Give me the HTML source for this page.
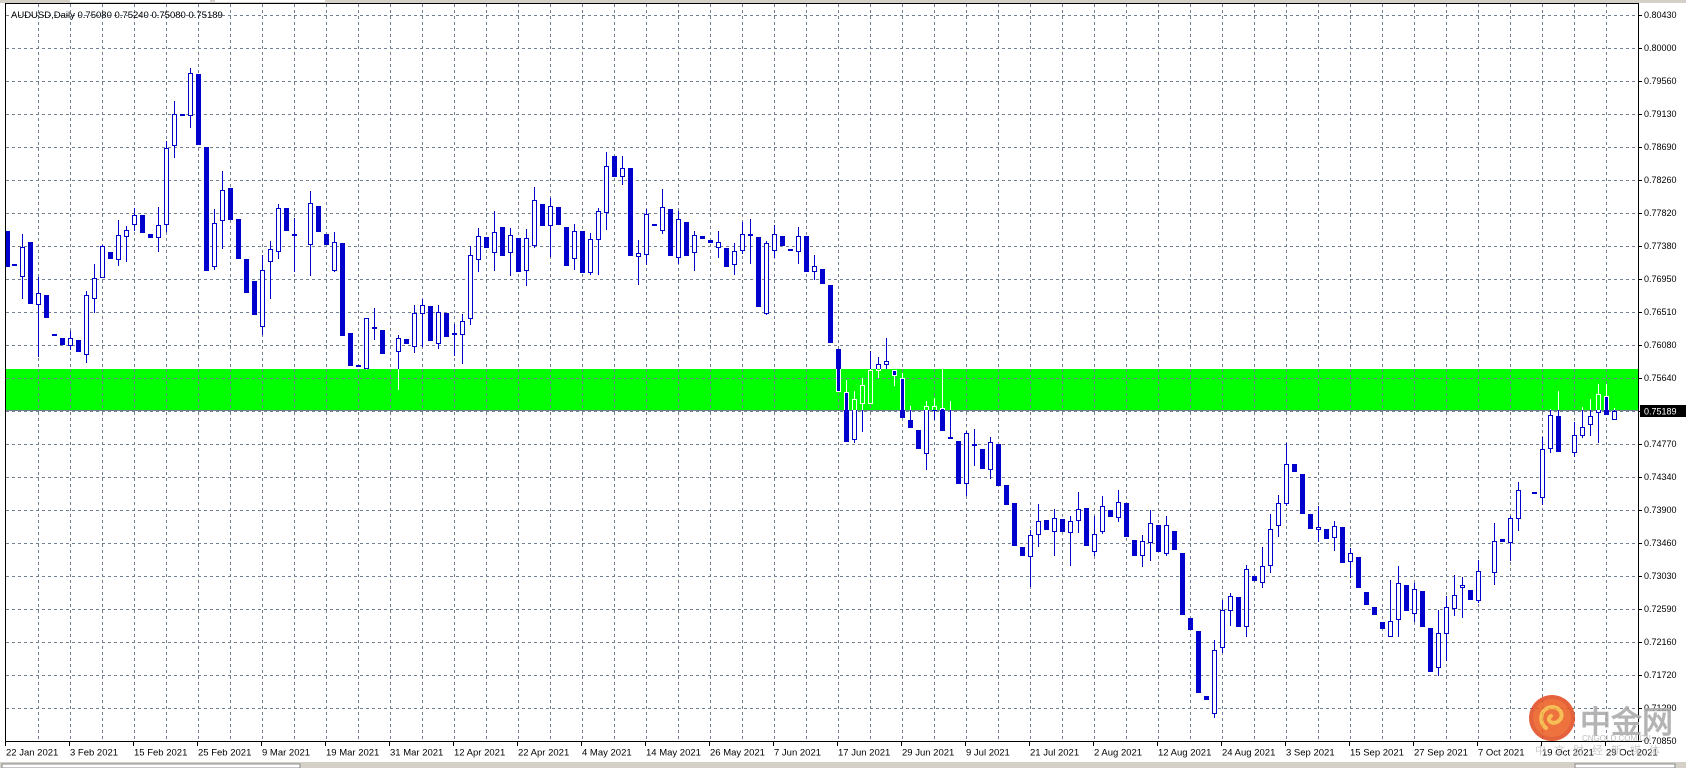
<!DOCTYPE html>
<html><head><meta charset="utf-8">
<style>
html,body{margin:0;padding:0;background:#fff;width:1686px;height:768px;overflow:hidden}
svg{display:block}
text{font-family:"Liberation Sans",sans-serif}
</style></head>
<body>
<svg id="c" width="1686" height="768" xmlns="http://www.w3.org/2000/svg">
<rect x="0" y="0" width="1686" height="768" fill="#fff"/>
<rect x="0" y="0" width="1686" height="3" fill="#d4d0c8"/>
<rect x="70" y="0" width="140" height="2" fill="#fff"/>
<rect x="215" y="0" width="110" height="2" fill="#fff"/>
<rect x="0" y="762" width="1686" height="6" fill="#d4d0c8"/>
<rect x="2" y="764" width="298" height="4" fill="#fff" stroke="#888" stroke-width="1"/>
<rect x="1575" y="764" width="100" height="4" fill="#fff" stroke="#888" stroke-width="1"/>
<g id="grid"></g>
<rect x="6" y="369" width="1632" height="42" fill="#00ff00"/>
<g id="grid2"></g>
<line x1="6" y1="410.5" x2="1638" y2="410.5" stroke="#708090" stroke-width="1"/>
<g id="candles"></g>
<defs><clipPath id="gc"><rect x="6" y="369" width="1632" height="41"/></clipPath></defs>
<g id="candles2" clip-path="url(#gc)"></g>
<line x1="5.5" y1="3" x2="5.5" y2="742" stroke="#000"/>
<line x1="5" y1="3.5" x2="1638" y2="3.5" stroke="#000"/>
<line x1="1638.5" y1="3" x2="1638.5" y2="742" stroke="#000"/>
<line x1="5" y1="741.5" x2="1639" y2="741.5" stroke="#000"/>
<text x="11" y="18" font-size="9.5" fill="#000">AUDUSD,Daily  0.75080 0.75240 0.75080 0.75189</text>
<g id="axis" font-size="9" fill="#000"></g>
<rect x="1640" y="405" width="46" height="12" fill="#000"/>
<text x="1644" y="414.5" font-size="9" fill="#fff">0.75189</text>
<g id="dates" font-size="9.5" fill="#000"></g>
<g opacity="0.85">
<circle cx="1552" cy="718" r="23" fill="#e0471b"/>
<circle cx="1552" cy="718" r="19" fill="#ea5a1c"/>
<path d="M1546 728 C1538 722 1540 708 1552 707 C1562 707 1565 718 1557 722 C1551 725 1546 719 1551 716" fill="none" stroke="#f6b23a" stroke-width="4" stroke-linecap="round"/>
<text x="1580" y="733" font-size="31" fill="#a8a8a8" font-family="'Noto Sans CJK SC',sans-serif" font-weight="bold">中金网</text>
<text x="1582" y="741" font-size="8" fill="#b0b0b0">CNGOLD.COM.CN</text>
<text x="1535" y="754" font-size="11" fill="#c0c0c0" font-family="'Noto Sans CJK SC',sans-serif" letter-spacing="8">中文财经新媒体</text>
</g>
</svg>
<script>
var NS="http://www.w3.org/2000/svg";
function el(p,n,a,t){var e=document.createElementNS(NS,n);for(var k in a)e.setAttribute(k,a[k]);if(t!=null)e.textContent=t;p.appendChild(e);return e;}
var grid=document.getElementById('grid'),grid2=document.getElementById('grid2');
[grid,grid2].forEach(function(g,gi){
for(var k=0;k<22;k++){var y=Math.round(14.7+33*k)+0.5;if(gi==1&&(y<369||y>411))continue;
el(g,'line',{x1:6,y1:y,x2:1638,y2:y,stroke:'#708090','stroke-dasharray':'3,3','stroke-width':1});}
for(var k=0;k<50;k++){var x=Math.round(38.3+32*k)+0.5;
if(gi==0)el(g,'line',{x1:x,y1:4,x2:x,y2:741,stroke:'#708090','stroke-dasharray':'3,3','stroke-width':1});
else el(g,'line',{x1:x,y1:369,x2:x,y2:411,stroke:'#708090','stroke-dasharray':'3,3','stroke-width':1});}
});
var prices=["0.80430","0.80000","0.79560","0.79130","0.78690","0.78260","0.77820","0.77380","0.76950","0.76510","0.76080","0.75640",null,"0.74770","0.74340","0.73900","0.73460","0.73030","0.72590","0.72160","0.71720","0.71290","0.70850"];
var ax=document.getElementById('axis');
prices.forEach(function(p,k){var y=14.7+33*k;el(ax,'line',{x1:1638,y1:Math.round(y)+0.5,x2:1642,y2:Math.round(y)+0.5,stroke:'#000'});if(p)el(ax,'text',{x:1644,y:y+3.5},p);});
var dates=["22 Jan 2021","3 Feb 2021","15 Feb 2021","25 Feb 2021","9 Mar 2021","19 Mar 2021","31 Mar 2021","12 Apr 2021","22 Apr 2021","4 May 2021","14 May 2021","26 May 2021","7 Jun 2021","17 Jun 2021","29 Jun 2021","9 Jul 2021","21 Jul 2021","2 Aug 2021","12 Aug 2021","24 Aug 2021","3 Sep 2021","15 Sep 2021","27 Sep 2021","7 Oct 2021","19 Oct 2021","29 Oct 2021"];
var dg=document.getElementById('dates');
dates.forEach(function(d,i){var x=5+64*i;el(dg,'line',{x1:x+0.5,y1:742,x2:x+0.5,y2:746,stroke:'#000'});el(dg,'text',{x:x+1,y:755.5},d);});
var groups=[
[0,50,3,[[20,'d',543,650],[43,'d',641,647],[67,'u',592,680,552,746],[91,'d',576,762],[115,'u',730,766,682,922],[139,'d',735,803],[163,'d',852,858],[187,'d',864,884],[211,'u',865,889,843,899],[235,'d',870,905],[259,'u',736,916,724,940],[283,'u',685,748,642,788],[307,'u',589,685,584,685],[331,'d',606,626],[355,'u',556,631,510,647],[379,'u',541,562,528,635],[403,'u',496,526,475,542],[427,'d',495,548],[451,'d',552,563],[475,'u',526,565,471,605],[499,'u',295,526,273,545],[523,'u',193,289,153,323],[547,'d',192,198],[571,'u',70,199,54,234],[595,'d',72,284],[619,'d',292,662],[643,'u',520,650,477,660],[667,'u',421,514,363,596],[691,'d',414,509],[715,'d',507,626],[739,'d',627,728],[763,'d',693,794],[787,'u',661,832,614,854],[811,'u',598,637,574,746],[835,'u',475,607,462,626],[859,'d',474,542],[883,'u',552,559,503,667],[931,'u',460,586,423,678],[955,'d',468,545],[979,'d',552,584],[1003,'u',577,662,546,665],[1027,'d',579,857],[1051,'d',849,947],[1075,'d',945,950],[1099,'u',805,958,805,960],[1123,'u',830,834,774,869]]],
[380,130,3,[[7,'d',600,671],[55,'u',625,667,615,780],[79,'d',627,641],[103,'u',550,652,525,668],[127,'u',526,553,508,651],[151,'d',528,632],[175,'u',547,643,525,656],[199,'d',549,620],[223,'u',610,616,582,679],[247,'u',574,614,552,701],[271,'u',376,568,347,584],[295,'u',319,391,294,425],[319,'d',321,353],[343,'u',307,370,243,422],[367,'d',291,377],[391,'u',316,370,294,437],[415,'d',324,425],[439,'u',325,424,297,469],[463,'u',211,349,171,353],[487,'d',222,287],[511,'u',229,289,205,380],[535,'d',231,284],[559,'d',291,407],[583,'u',304,388,283,421],[607,'d',303,428],[631,'u',328,428,310,434],[655,'u',244,331,235,434],[679,'u',109,250,66,299],[703,'d',78,140],[727,'u',115,142,78,164],[751,'d',114,377],[775,'u',370,381,330,464],[799,'u',253,374,238,405],[823,'d',283,289],[847,'u',232,304,178,311],[871,'d',237,377],[895,'u',268,385,244,401],[919,'d',276,377],[943,'u',316,370,303,422],[967,'d',318,326],[991,'d',330,338],[1015,'u',337,355,303,383],[1039,'d',354,412],[1063,'u',364,406,340,434],[1087,'u',313,364,277,373],[1111,'u',312,316,267,401],[1135,'d',321,530],[1159,'u',340,553,333,556],[1183,'u',313,364,285,385],[1207,'d',318,347],[1231,'d',358,362],[1255,'u',319,367,292,402]]],
[790,200,3,[[49,'d',107,215],[73,'u',199,217,165,241],[97,'d',207,251]]],
[760,300,3,[[235,'d',147,277],[259,'d',277,425,240,425],[283,'u',297,421,273,430],[307,'u',256,311,234,395],[331,'u',211,311,152,311],[355,'u',193,214,171,234],[379,'u',184,196,114,207],[403,'d',211,229,211,257],[427,'d',233,353,220,353],[451,'d',360,383,318,383],[475,'d',390,446],[499,'u',319,461,303,509],[523,'u',319,333,293,360],[547,'d',323,393,207,393],[571,'d',411,416,303,416],[595,'d',423,551],[619,'u',400,553,393,587],[643,'u',431,435,387,497],[667,'d',447,506],[691,'u',427,509,411,536],[715,'d',432,557],[739,'d',555,614],[763,'d',608,737],[787,'d',741,767],[811,'u',706,770,689,860],[835,'u',664,706,612,740],[859,'d',660,689],[883,'u',655,697,628,767],[907,'d',657,697],[931,'u',664,700,648,797],[955,'u',628,664,577,700],[979,'d',625,737],[1003,'u',703,757,648,768],[1027,'u',619,697,589,703],[1051,'d',630,650],[1075,'u',607,655,571,665],[1099,'d',609,710],[1123,'d',720,767],[1147,'u',724,769,705,800],[1171,'u',670,730,631,782]]],
[1100,370,3,[[175,'d',465,545],[199,'u',466,553,438,557],[223,'d',484,539],[247,'d',549,734],[391,'u',679,724,670,767],[415,'d',681,770],[439,'u',598,772,585,802],[463,'d',618,632],[487,'u',589,640,531,653],[511,'u',478,589,432,608],[535,'u',400,469,376,500],[559,'u',283,403,220,409],[583,'d',283,305],[607,'d',313,431],[631,'d',432,476],[655,'u',472,481,408,517],[679,'d',477,506],[703,'u',469,505,453,542],[727,'d',471,578],[751,'u',550,577,533,624],[775,'d',561,653],[799,'d',666,704],[823,'d',711,734],[847,'d',756,778],[871,'u',754,802,630,802],[895,'u',640,751,588,800],[919,'d',646,722],[943,'u',658,733,638,755],[967,'d',663,770],[1063,'u',676,718,616,737],[1087,'u',646,655,621,743],[1111,'d',660,689],[1135,'u',604,694,570,700],[1183,'u',514,610,459,644],[1207,'d',508,516],[1231,'u',445,520,438,572],[1255,'u',361,448,336,482]]],
[1180,600,3,[[31,'d',54,89],[55,'d',93,278],[79,'d',288,300],[103,'u',151,341,121,353],[127,'u',31,145,0,160]]],
[0,0,1,[[830,'d',285,343],[1430,'d',628,672],[1438,'u',633,668,610,676],[1446,'u',607,634,596,661],[1534,'d',492,494],[1542,'u',449,498,437,505],[1550,'u',415,449,409,453],[1558,'d',416,452,391,452],[1574,'u',435,453,422,457],[1582,'u',427,436,407,438],[1590,'u',416,425,399,436],[1598,'u',394,413,384,443],[1606,'d',396,415,384,415],[1614,'u',411,420,408,420]]]
];
var cg=document.getElementById('candles'),cg2=document.getElementById('candles2');
var B='#0000cd';
function draw(g,ox,oy,s,c,alt){
 var cx=Math.round(ox+c[0]/s);
 var bt=Math.round(oy+c[2]/s),bb=Math.round(oy+c[3]/s);
 var wt=c.length>4?Math.round(oy+c[4]/s):bt,wb=c.length>5?Math.round(oy+c[5]/s):bb;
 var col=alt?'#fff':B;
 if(wt<bt)el(g,'line',{x1:cx+0.5,y1:wt,x2:cx+0.5,y2:bt,stroke:col});
 if(wb>bb)el(g,'line',{x1:cx+0.5,y1:bb,x2:cx+0.5,y2:wb,stroke:col});
 if(c[1]=='d'){
  var h=Math.max(bb-bt,2);
  if(alt)el(g,'rect',{x:cx-1.5,y:bt+0.5,width:4,height:h-1,fill:B,stroke:'#fff'});
  else el(g,'rect',{x:cx-2,y:bt,width:5,height:h,fill:B});
 }else{
  var h=Math.max(bb-bt,2);
  el(g,'rect',{x:cx-1.5,y:bt+0.5,width:4,height:h-1,fill:alt?'#00ff00':'#fff',stroke:col});
 }
}
groups.forEach(function(G){G[3].forEach(function(c){draw(cg,G[0],G[1],G[2],c,false);draw(cg2,G[0],G[1],G[2],c,true);});});
</script>
</body></html>
